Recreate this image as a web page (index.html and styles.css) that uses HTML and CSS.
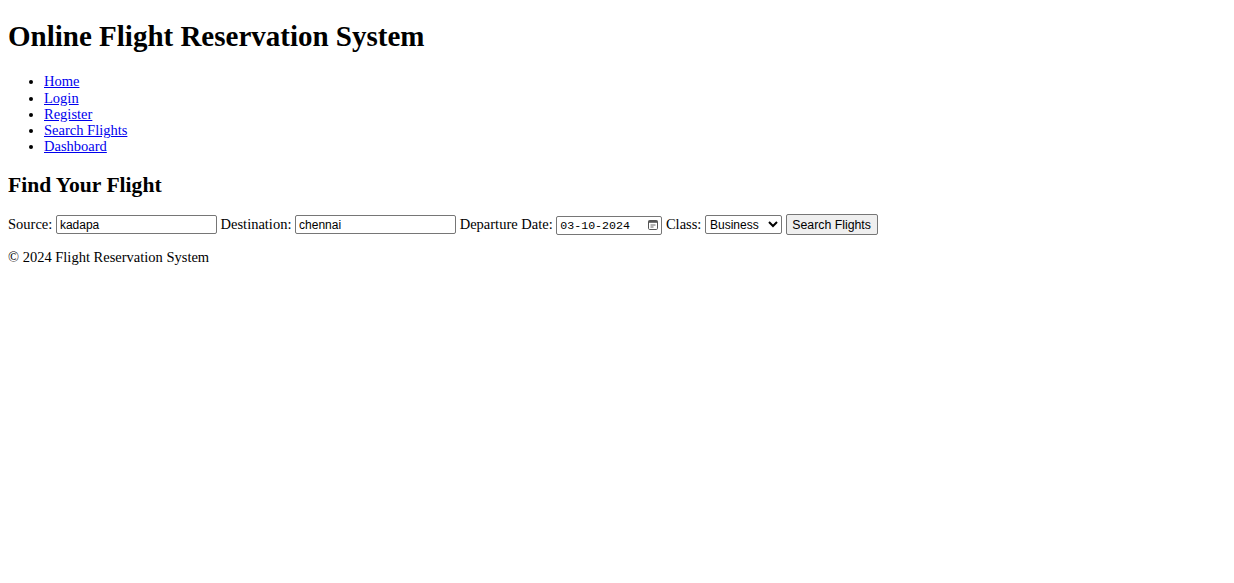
FILE: index.html
```html
<!DOCTYPE html>
<html lang="en">
<head>
<meta charset="utf-8">
<title>Online Flight Reservation System</title>
<link rel="stylesheet" href="styles.css">
</head>
<body>
<header>
  <h1 class="site-title">Online Flight Reservation System</h1>
  <nav>
    <ul class="nav-list">
      <li><a href="#">Home</a></li>
      <li><a href="#">Login</a></li>
      <li><a href="#">Register</a></li>
      <li><a href="#">Search Flights</a></li>
      <li><a href="#">Dashboard</a></li>
    </ul>
  </nav>
</header>
<main>
  <h2 class="section-title">Find Your Flight</h2>
  <form class="search-form">
    <label for="src">Source:</label>
    <input class="text-field" type="text" id="src" value="kadapa">
    <label for="dst">Destination:</label>
    <input class="text-field" type="text" id="dst" value="chennai">
    <label for="date">Departure Date:</label>
    <span class="date-field"><input class="date-text" type="text" id="date" value="03-10-2024"><svg class="cal-icon" width="10" height="10" viewBox="0 0 10 10"><rect x="0.5" y="0.5" width="9" height="9" rx="1.2" fill="none" stroke="#555" stroke-width="1"/><rect x="0.5" y="0.5" width="9" height="2.3" fill="#555"/><line x1="2.5" y1="5" x2="7.5" y2="5" stroke="#555" stroke-width="0.9"/><line x1="2.5" y1="7" x2="5.5" y2="7" stroke="#555" stroke-width="0.9"/></svg></span>
    <label for="cls">Class:</label>
    <select class="select-field" id="cls">
      <option>Economy</option>
      <option selected>Business</option>
      <option>First</option>
    </select>
    <button class="btn" type="button">Search Flights</button>
  </form>
</main>
<footer>
  <p class="footer-text">&copy; 2024 Flight Reservation System</p>
</footer>
</body>
</html>
```

FILE: styles.css
```css
html, body {
  background: #fff;
}
body {
  margin: 8px;
  font-family: "Liberation Serif", "Times New Roman", serif;
  font-size: 14.5px;
  line-height: 16.25px;
  color: #000;
}
.site-title {
  font-size: 29px;
  line-height: 33px;
  margin: 12px 0 20.4px;
  font-weight: bold;
}
.nav-list {
  margin: 14px 0;
  padding-left: 36px;
}
.nav-list a {
  color: #0000ee;
}
.section-title {
  font-size: 21.6px;
  line-height: 24.5px;
  margin: 18.6px 0 16.6px;
  font-weight: bold;
}
.search-form {
  margin: 0;
}
.text-field {
  box-sizing: border-box;
  width: 161px;
  height: 19px;
  font-family: "Liberation Sans", Arial, sans-serif;
  font-size: 12px;
  padding: 1px 3px;
  border: 1px solid #767676;
  border-radius: 2px;
}
.date-field {
  box-sizing: border-box;
  display: inline-flex;
  align-items: center;
  width: 106px;
  height: 19px;
  border: 1px solid #767676;
  border-radius: 2px;
  padding: 0 3px;
  background: #fff;
}
.date-text {
  border: 0;
  padding: 0;
  margin: 0;
  width: 84px;
  font-family: "Liberation Mono", "DejaVu Sans Mono", monospace;
  font-size: 11.6px;
  color: #000;
  outline: none;
  background: transparent;
}
.cal-icon {
  margin-left: auto;
  display: block;
}
.select-field {
  box-sizing: border-box;
  width: 77px;
  height: 19px;
  font-family: "Liberation Sans", Arial, sans-serif;
  font-size: 12px;
  border: 1px solid #767676;
  border-radius: 2px;
  background: #fff;
  color: #000;
}
.btn {
  box-sizing: border-box;
  width: 92px;
  height: 21px;
  font-family: "Liberation Sans", Arial, sans-serif;
  font-size: 12.3px;
  background: #efefef;
  border: 1px solid #767676;
  border-radius: 2px;
  color: #000;
  padding: 1px 5px;
}
.footer-text {
  margin: 14px 0;
}
```
